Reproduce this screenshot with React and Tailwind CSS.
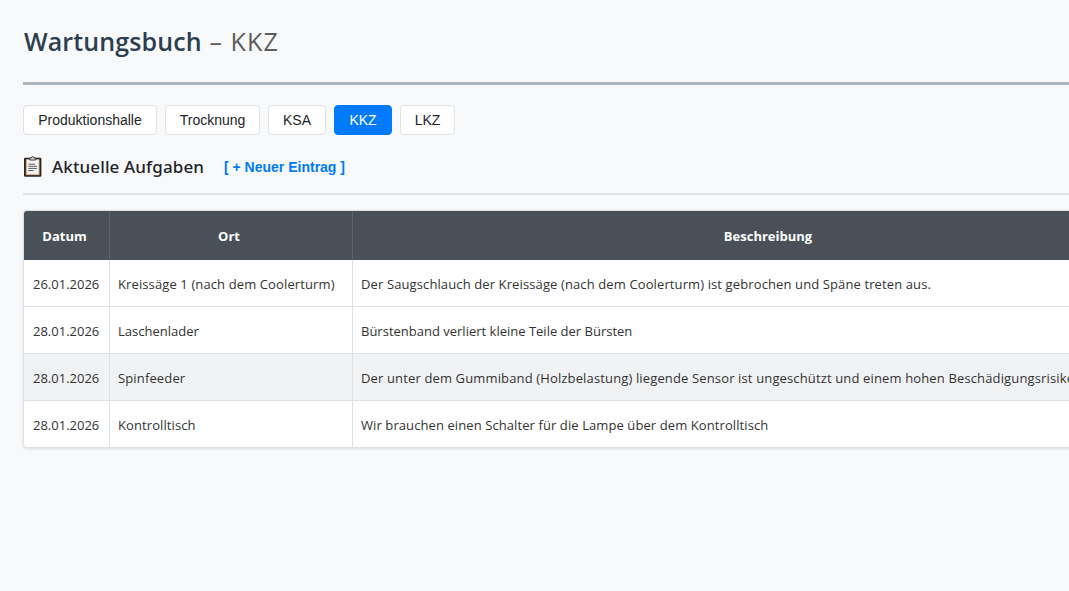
import React from 'react';

const tabs = [
  { name: 'Produktionshalle', width: 'w-[134px]' },
  { name: 'Trocknung', width: 'w-[95px]' },
  { name: 'KSA', width: 'w-[58px]' },
  { name: 'KKZ', width: 'w-[58px]' },
  { name: 'LKZ', width: 'w-[55px]' }
];

const entries = [
  {
    date: '26.01.2026',
    place: 'Kreissäge 1 (nach dem Coolerturm)',
    text: 'Der Saugschlauch der Kreissäge (nach dem Coolerturm) ist gebrochen und Späne treten aus.',
    tracking: 'tracking-[0.115px]'
  },
  {
    date: '28.01.2026',
    place: 'Laschenlader',
    text: 'Bürstenband verliert kleine Teile der Bürsten',
    tracking: 'tracking-normal'
  },
  {
    date: '28.01.2026',
    place: 'Spinfeeder',
    text: 'Der unter dem Gummiband (Holzbelastung) liegende Sensor ist ungeschützt und einem hohen Beschädigungsrisiko',
    tracking: 'tracking-[0.14px]',
    marked: true
  },
  {
    date: '28.01.2026',
    place: 'Kontrolltisch',
    text: 'Wir brauchen einen Schalter für die Lampe über dem Kontrolltisch',
    tracking: 'tracking-[0.09px]'
  }
];

const ClipboardIcon = () => (
  <svg width="18" height="21" viewBox="0 0 18 21" className="shrink-0">
    <rect x="0" y="1.8" width="17.4" height="19" rx="1.2" fill="#262425" />
    <rect x="1.7" y="3.2" width="14" height="16" fill="#c98a58" />
    <path d="M2.7 3.6h12v14.8h-12z" fill="#f3f3f5" />
    <path d="M5.6 4V1.9h1.8a1.3 1.3 0 0 1 2.6 0h1.8V4z" fill="#d2d2d4" stroke="#2f2f31" strokeWidth="0.9" />
    <path d="M4.4 8.2h6.6M4.4 10.3h8.6M4.4 12.4h8.6M4.4 14.5h5" stroke="#5c5c60" strokeWidth="1" />
  </svg>
);

const App = () => {
  const activeTab = 'KKZ';

  return (
    <div className="h-screen overflow-hidden bg-[#f8f9fb] pl-[23px] font-['Open_Sans','Noto_Sans',sans-serif] text-[#212529]">
      <header className="flex h-[85px] items-start border-b-3 border-[#adb5bd] pt-[23px] pl-px">
        <h1 className="whitespace-pre text-[25px] leading-[36px] font-semibold tracking-[0.12px] text-[#2c3e50]">
          Wartungsbuch<span className="font-normal tracking-[1.1px] text-[#5c5c5c]"> – KKZ</span>
        </h1>
      </header>

      {/* Area tabs */}
      <nav className="mt-5 flex gap-2 font-['Liberation_Sans',Arial,sans-serif] text-[14px]">
        {tabs.map(tab => (
          <button
            key={tab.name}
            className={`h-[30px] rounded-[4px] border ${tab.width} ${
              tab.name === activeTab
                ? 'border-[#007bff] bg-[#007bff] text-white'
                : 'border-[#dee2e6] bg-white text-[#212529]'
            }`}
          >
            {tab.name}
          </button>
        ))}
      </nav>

      {/* Section title */}
      <div className="flex h-[60px] items-start border-b-2 border-[#dee2e6] pt-[17px]">
        <div className="flex h-[28px] items-center pl-px">
          <ClipboardIcon />
          <h2 className="ml-[10px] w-[152px] pt-[2px] font-['Noto_Sans','Open_Sans',sans-serif] text-[17px] font-medium tracking-[0.12px] whitespace-nowrap">
            Aktuelle Aufgaben
          </h2>
          <button className="ml-[20px] pt-[2px] font-['Liberation_Sans',Arial,sans-serif] text-[14px] font-bold whitespace-nowrap text-[#007bff]">
            [ + Neuer Eintrag ]
          </button>
        </div>
      </div>

      {/* Tasks */}
      <div className="mt-[15px] w-[1162px] overflow-hidden rounded-[4px] border border-[#dee2e6] bg-white shadow-[0_1px_3px_rgba(0,0,0,0.12)]">
        <table className="w-full table-fixed border-separate border-spacing-0 text-[13px]">
          <colgroup>
            <col className="w-[86px]" />
            <col className="w-[243px]" />
            <col />
          </colgroup>
          <thead>
            <tr className="h-[49px] bg-[#495057] text-white">
              <th className="border-r border-[#5c636a] pt-[3px] pr-[4px] font-bold">Datum</th>
              <th className="border-r border-[#5c636a] pt-[3px] pr-[4px] font-bold">Ort</th>
              <th className="pt-[3px] pr-px font-bold">Beschreibung</th>
            </tr>
          </thead>
          <tbody className="text-[#333]">
            {entries.map(entry => (
              <tr
                key={entry.place}
                className={`h-[47px] last:h-[46px] [&>td]:border-b [&>td]:border-[#dee2e6] [&>td]:pt-[3px] last:[&>td]:border-b-0 ${
                  entry.marked ? 'bg-[#f1f2f4]' : ''
                }`}
              >
                <td className="border-r pl-[9px] whitespace-nowrap">{entry.date}</td>
                <td className={`border-r pl-[8px] whitespace-nowrap ${entry.tracking}`}>{entry.place}</td>
                <td className={`pl-[8px] whitespace-nowrap ${entry.tracking}`}>{entry.text}</td>
              </tr>
            ))}
          </tbody>
        </table>
      </div>
    </div>
  );
};

export default App;
